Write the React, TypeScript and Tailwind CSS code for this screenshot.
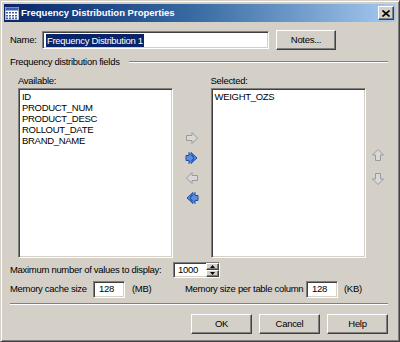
import React from "react";

const sunken =
  "border border-t-[#808080] border-l-[#808080] border-b-white border-r-white shadow-[inset_1px_1px_0_#404040,inset_-1px_-1px_0_#d4d0c8] bg-white";
const raised =
  "border border-t-white border-l-white border-b-[#404040] border-r-[#404040] shadow-[inset_-1px_-1px_0_#808080] bg-[#d4d0c8]";

function Btn({ label, className }: { label: string; className: string }) {
  return (
    <div className={`${raised} flex items-center justify-center text-black ${className}`}>
      {label}
    </div>
  );
}

function Arrow({ dir, blue, double }: { dir: "r" | "l" | "u" | "d"; blue?: boolean; double?: boolean }) {
  const fill = blue ? "#5a8fe0" : "#d8d8d8";
  const stroke = blue ? "#1f4fa8" : "#9a9a9a";
  const rot = dir === "r" ? 0 : dir === "l" ? 180 : dir === "u" ? -90 : 90;
  return (
    <svg width="14" height="14" viewBox="0 0 14 14">
      <g transform={`rotate(${rot} 7 7)`}>
        {double ? (
          <>
            <path d="M1 4.5h3V1.5l5 5.5-5 5.5V9.5H1z" fill={fill} stroke={stroke} strokeWidth="1" />
            <path d="M6 1.5l6 5.5-6 5.5L9 7z" fill={fill} stroke={stroke} strokeWidth="1" />
          </>
        ) : (
          <path d="M1.5 4.5h5.5V1.5l5.5 5.5-5.5 5.5V9.5H1.5z" fill={fill} stroke={stroke} strokeWidth="1" />
        )}
      </g>
    </svg>
  );
}

export default function App() {
  const available = ["ID", "PRODUCT_NUM", "PRODUCT_DESC", "ROLLOUT_DATE", "BRAND_NAME"];
  return (
    <div
      className="w-[400px] h-[342px] bg-[#d4d0c8] border border-t-[#d4d0c8] border-l-[#d4d0c8] border-b-[#404040] border-r-[#404040] shadow-[inset_1px_1px_0_#fff,inset_-1px_-1px_0_#808080] p-[3px] text-[9.5px] tracking-[-0.3px] text-black overflow-hidden whitespace-nowrap"
      style={{ fontFamily: "Tahoma, 'Liberation Sans', Arial, sans-serif" }}
    >
      {/* Title bar */}
      <div className="h-[18px] flex items-center bg-gradient-to-r from-[#0a246a] via-[#3a6ea5] to-[#a6caf0] pl-[1px] pr-[2px]">
        <svg width="14" height="13" viewBox="0 0 14 13" className="mr-[2px]">
          <rect x="0.5" y="0.5" width="13" height="12" fill="#fff" stroke="#c0c0c0" />
          <rect x="0.5" y="0.5" width="13" height="3" fill="#3a5fa8" />
          {[5, 8, 10.5].map((y) =>
            [2, 5, 8, 11].map((x) => <rect key={`${x}-${y}`} x={x - 1} y={y} width="2" height="1.5" fill="#4060a0" />)
          )}
        </svg>
        <span className="font-bold text-white text-[9.5px] tracking-normal flex-1">Frequency Distribution Properties</span>
        <div className={`${raised} w-[16px] h-[14px] flex items-center justify-center`}>
          <svg width="8" height="7" viewBox="0 0 8 7">
            <path d="M0.5 0.5l7 6M7.5 0.5l-7 6" stroke="#000" strokeWidth="1.6" />
          </svg>
        </div>
      </div>

      <div className="px-[6px]">
        {/* Name row */}
        <div className="flex items-center mt-[8px] h-[20px]">
          <span className="w-[32px]">Name:</span>
          <div className={`${sunken} w-[227px] h-[18px] flex items-center px-[3px]`}>
            <span className="bg-[#0a246a] text-white leading-[13px] px-[1px]">Frequency Distribution 1</span>
          </div>
          <Btn label="Notes..." className="ml-[7px] w-[60px] h-[20px]" />
        </div>

        {/* Group header */}
        <div className="flex items-center mt-[5px] h-[14px]">
          <span>Frequency distribution fields</span>
          <div className="flex-1 ml-[9px] mr-[2px] h-[2px] border-t border-t-[#808080] border-b border-b-white" />
        </div>

        {/* Lists */}
        <div className="flex mt-[5px] pl-[8px]">
          <div className="flex flex-col">
            <span className="h-[14px] leading-[14px]">Available:</span>
            <div className={`${sunken} w-[155px] h-[170px] px-[3px] pt-[2px]`}>
              {available.map((a) => (
                <div key={a} className="leading-[11px]">{a}</div>
              ))}
            </div>
          </div>
          <div className="w-[40px] flex flex-col items-center pt-[57px] gap-[6px]">
            <Arrow dir="r" />
            <Arrow dir="r" blue double />
            <Arrow dir="l" />
            <Arrow dir="l" blue double />
          </div>
          <div className="flex flex-col">
            <span className="h-[14px] leading-[14px]">Selected:</span>
            <div className={`${sunken} w-[155px] h-[170px] px-[3px] pt-[2px]`}>
              <div className="leading-[11px]">WEIGHT_OZS</div>
            </div>
          </div>
          <div className="w-[26px] flex flex-col items-center pt-[74px] gap-[10px]">
            <Arrow dir="u" />
            <Arrow dir="d" />
          </div>
        </div>

        {/* Max values */}
        <div className="flex items-center mt-[4px] h-[16px]">
          <span className="w-[163px]">Maximum number of values to display:</span>
          <div className={`${sunken} w-[47px] h-[16px] flex items-center pl-[4px]`}>
            <span className="flex-1">1000</span>
            <div className="flex flex-col w-[13px] h-full">
              <div className={`${raised} flex-1 flex items-center justify-center`}>
                <svg width="5" height="3" viewBox="0 0 5 3"><path d="M0 3h5L2.5 0z" fill="#000" /></svg>
              </div>
              <div className={`${raised} flex-1 flex items-center justify-center`}>
                <svg width="5" height="3" viewBox="0 0 5 3"><path d="M0 0h5L2.5 3z" fill="#000" /></svg>
              </div>
            </div>
          </div>
        </div>

        {/* Memory row */}
        <div className="flex items-center mt-[3px] h-[17px]">
          <span className="w-[83px]">Memory cache size</span>
          <div className={`${sunken} w-[32px] h-[17px] flex items-center pl-[5px]`}>128</div>
          <span className="ml-[7px] w-[53px]">(MB)</span>
          <span className="w-[121px]">Memory size per table column</span>
          <div className={`${sunken} w-[32px] h-[17px] flex items-center pl-[5px]`}>128</div>
          <span className="ml-[6px]">(KB)</span>
        </div>

        {/* Separator */}
        <div className="mt-[5px] mr-[2px] h-[2px] border-t border-t-[#808080] border-b border-b-white" />

        {/* Buttons */}
        <div className="flex justify-end gap-[7px] mt-[9px] mr-[2px]">
          <Btn label="OK" className="w-[61px] h-[20px]" />
          <Btn label="Cancel" className="w-[61px] h-[20px]" />
          <Btn label="Help" className="w-[61px] h-[20px]" />
        </div>
      </div>
    </div>
  );
}
